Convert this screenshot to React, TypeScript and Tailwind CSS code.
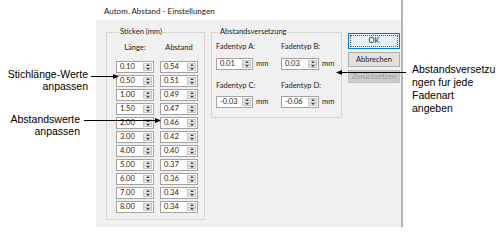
const dlgFont = { fontFamily: '"Lato", "Noto Sans", sans-serif' };

const laenge = ['0.10', '0.50', '1.00', '1.50', '2.00', '3.00', '4.00', '5.00', '6.00', '7.00', '8.00'];
const abstand = ['0.54', '0.51', '0.49', '0.47', '0.46', '0.42', '0.40', '0.37', '0.36', '0.34', '0.34'];

function Spin({ value, w = 'w-[38px]' }: { value: string; w?: string }) {
    return (
        <div className={`${w} h-[12px] flex items-stretch bg-white border border-[#a3a3a3]`}>
            <span className="flex-1 pl-[3px] text-[7.5px] leading-[10px] text-[#222]">{value}</span>
            <div className="w-[9px] my-[1px] mr-[1px] flex flex-col bg-[#e9e9e9] border border-[#c4c4c4]">
                <div className="flex-1 flex items-center justify-center border-b border-[#c4c4c4]">
                    <svg width="4" height="2" viewBox="0 0 4 2">
                        <path d="M0 2L2 0L4 2Z" fill="#444" />
                    </svg>
                </div>
                <div className="flex-1 flex items-center justify-center">
                    <svg width="4" height="2" viewBox="0 0 4 2">
                        <path d="M0 0L2 2L4 0Z" fill="#444" />
                    </svg>
                </div>
            </div>
        </div>
    );
}

export default function App() {
    return (
        <div
            className="relative w-[501px] h-[241px] bg-white flex overflow-hidden"
            style={{ fontFamily: '"Liberation Sans", Arial, sans-serif' }}
        >
            {/* left notes */}
            <div className="w-[96px] flex flex-col items-end text-[10.5px] leading-[12px] text-black">
                <div className="mt-[68px] pr-[8px] text-right">
                    Stichlänge-Werte
                    <br />
                    anpassen
                </div>
                <div className="mt-[21px] pr-[16px] text-right">
                    Abstandswerte
                    <br />
                    anpassen
                </div>
            </div>

            {/* dialog */}
            <div className="w-[307px] h-[227px] flex flex-col border-r-2 border-[#b4b4b4]" style={dlgFont}>
                <div className="h-[20px] pl-[8px] pt-[6px] text-[8px] leading-[11px] text-[#222]">
                    Autom. Abstand - Einstellungen
                </div>
                <div className="flex-1 bg-[#f0f0f0] flex items-start gap-[6px] pl-[10px] pt-[7px] text-[7.5px] text-[#222]">
                    <fieldset className="w-[99px] h-[193px] border border-[#d5d5d5] pl-[9px]">
                        <legend className="ml-[3px] px-[1px] leading-[10px]">Sticken (mm)</legend>
                        <div className="mt-[6px] flex gap-[6px] leading-[10px]">
                            <span className="w-[38px] text-center">Länge:</span>
                            <span className="w-[38px] text-center">Abstand</span>
                        </div>
                        <div className="mt-[8px] flex flex-col gap-[2px]">
                            {laenge.map((l, i) => (
                                <div key={l} className="flex gap-[6px]">
                                    <Spin value={l} />
                                    <Spin value={abstand[i]} />
                                </div>
                            ))}
                        </div>
                    </fieldset>

                    <fieldset className="w-[126px] h-[91px] border border-[#d5d5d5] pl-[4px]">
                        <legend className="ml-[3px] px-[1px] leading-[10px]">Abstandsversetzung</legend>
                        <div className="grid grid-cols-[65px_60px] leading-[10px]">
                            <span className="mt-[5px]">Fadentyp A:</span>
                            <span className="mt-[5px]">Fadentyp B:</span>
                            <div className="mt-[6px] flex items-center gap-[3px]">
                                <Spin value="0.01" w="w-[37px]" />
                                <span>mm</span>
                            </div>
                            <div className="mt-[6px] flex items-center gap-[3px]">
                                <Spin value="0.03" w="w-[38px]" />
                                <span>mm</span>
                            </div>
                            <span className="mt-[11px]">Fadentyp C:</span>
                            <span className="mt-[11px]">Fadentyp D:</span>
                            <div className="mt-[5px] flex items-center gap-[3px]">
                                <Spin value="-0.03" w="w-[37px]" />
                                <span>mm</span>
                            </div>
                            <div className="mt-[5px] flex items-center gap-[3px]">
                                <Spin value="-0.06" w="w-[38px]" />
                                <span>mm</span>
                            </div>
                        </div>
                    </fieldset>

                    <div className="mt-[6px] w-[52px] flex flex-col gap-[3px]">
                        <button className="h-[16px] border border-[#0078d7] bg-[#e5f1fb] p-[1px]">
                            <span className="flex h-full items-center justify-center border border-dotted border-[#555] text-[7.5px] text-[#222]">
                                OK
                            </span>
                        </button>
                        <button className="h-[15px] border border-[#adadad] bg-[#e1e1e1] text-[7.5px] text-[#222]">
                            Abbrechen
                        </button>
                        <button className="h-[13px] border border-[#bfbfbf] bg-[#cccccc] text-[7.5px] text-[#9a9a9a]">
                            Zurücksetzen
                        </button>
                    </div>
                </div>
            </div>

            {/* right note */}
            <div className="pl-[9px] pt-[63px] text-[10.5px] leading-[13px] text-black">
                Abstandsversetzu
                <br />
                ngen fur jede
                <br />
                Fadenart
                <br />
                angeben
            </div>

            {/* callout arrows */}
            <svg className="absolute inset-0 pointer-events-none" width="501" height="241">
                <line x1="91" y1="76.5" x2="114" y2="76.5" stroke="#000" strokeWidth="1" />
                <path d="M119 76.5L113 74L113 79Z" fill="#000" />
                <line x1="84" y1="120.5" x2="156" y2="120.5" stroke="#000" strokeWidth="1" />
                <path d="M161 120.5L155 118L155 123Z" fill="#000" />
                <line x1="406" y1="72.5" x2="341" y2="72.5" stroke="#000" strokeWidth="1" />
                <path d="M336 72.5L342 70L342 75Z" fill="#000" />
            </svg>
        </div>
    );
}
